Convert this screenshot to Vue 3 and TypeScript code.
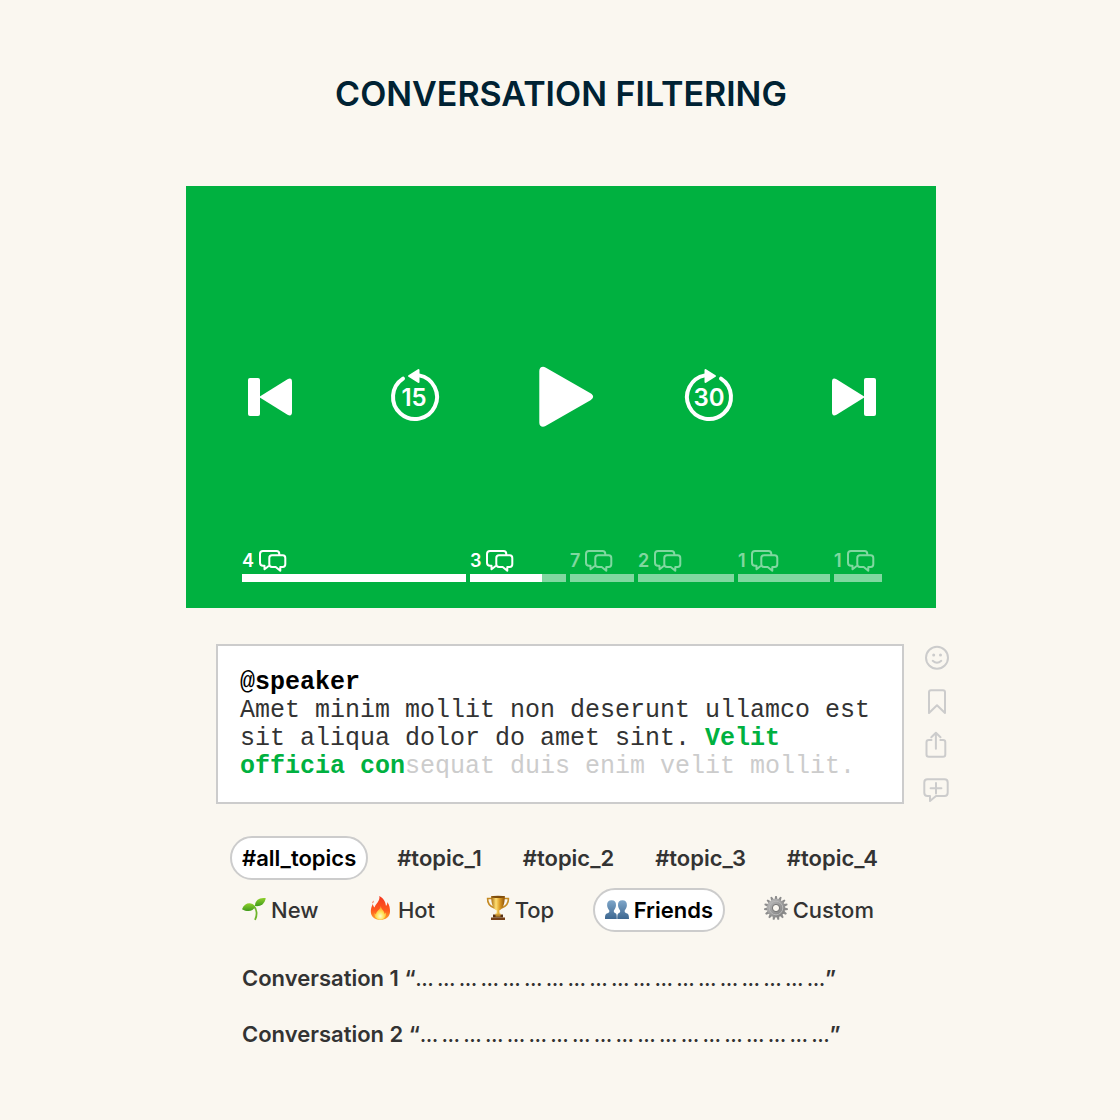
<script setup lang="ts">
import { ref } from 'vue'

interface Segment {
  comments: number
  length: number
  played: number
}

const segments: Segment[] = [
  { comments: 4, length: 224, played: 100 },
  { comments: 3, length: 96, played: 75 },
  { comments: 7, length: 64, played: 0 },
  { comments: 2, length: 96, played: 0 },
  { comments: 1, length: 92, played: 0 },
  { comments: 1, length: 48, played: 0 },
]

const topics: string[] = ['#all_topics', '#topic_1', '#topic_2', '#topic_3', '#topic_4']
const filters: string[] = ['New', 'Hot', 'Top', 'Friends', 'Custom']
const activeTopic = ref<string>('#all_topics')
const activeFilter = ref<string>('Friends')

const excerpt: string = Array(19).fill('…').join(' ')
const conversations: string[] = ['Conversation 1', 'Conversation 2']

const gearTeeth: number[] = Array.from({ length: 15 }, (_, i) => i * 24)
</script>

<template>
  <main class="page">
    <h1 class="title">CONVERSATION FILTERING</h1>

    <section class="player" aria-label="Player">
      <div class="controls">
        <button class="control" type="button" aria-label="Previous">
          <svg viewBox="0 0 56 56">
            <rect x="6" y="9" width="12" height="38" rx="2" />
            <path d="M17 28 45.5 10.2Q50 8 50 13V43Q50 48 45.5 45.8Z" />
          </svg>
        </button>
        <button class="control" type="button" aria-label="Back 15 seconds">
          <svg viewBox="0 0 56 56">
            <path class="ring" d="M15 9.6A22 22 0 1 0 31 6.4" />
            <path class="head" d="M21 7 30.5 1V13Z" />
            <text x="26" y="37">15</text>
          </svg>
        </button>
        <button class="control" type="button" aria-label="Play">
          <svg viewBox="0 0 56 56">
            <path d="M5.3 2C5.3-1.5 8.5-3.2 11.5-1.4L56.5 24.3C60 26.3 60 29.2 56.5 31.2L11.5 57C8.5 58.8 5.3 57.2 5.3 53.8Z" />
          </svg>
        </button>
        <button class="control" type="button" aria-label="Forward 30 seconds">
          <svg viewBox="0 0 56 56">
            <path class="ring" d="M41 9.6A22 22 0 1 1 25 6.4" />
            <path class="head" d="M35 7 25.5 1V13Z" />
            <text x="29" y="37">30</text>
          </svg>
        </button>
        <button class="control" type="button" aria-label="Next">
          <svg viewBox="0 0 56 56">
            <rect x="38" y="9" width="12" height="38" rx="2" />
            <path d="M39 28 10.5 10.2Q6 8 6 13V43Q6 48 10.5 45.8Z" />
          </svg>
        </button>
      </div>

      <div class="timeline">
        <div
          v-for="(segment, i) in segments"
          :key="i"
          class="segment"
          :class="{ upcoming: segment.played === 0 }"
          :style="{ flexGrow: segment.length }"
        >
          <div class="count">
            <span>{{ segment.comments }}</span>
            <svg class="chat" viewBox="0 0 28 22">
              <path d="M20.3 5V4Q20.3 1 17.5 1H4Q1 1 1 4V12.7Q1 15.7 4 15.7H5.5V19.3L10 15.7" />
              <path d="M13 5.3H23.7Q26.3 5.3 26.3 8V14.3Q26.3 17 23.7 17H21.3V20.7L16.7 17H13Q10.3 17 10.3 14.3V8Q10.3 5.3 13 5.3Z" />
            </svg>
          </div>
          <div class="track">
            <div class="fill" :style="{ width: segment.played + '%' }"></div>
          </div>
        </div>
      </div>
    </section>

    <section class="transcript">
      <div class="quote">
        <strong class="speaker"><span class="at">@</span>speaker</strong>
        <p>
          Amet minim mollit non deserunt ullamco est sit aliqua dolor do amet sint.
          <b>Velit officia con</b><span class="unspoken">sequat duis enim velit mollit.</span>
        </p>
      </div>
      <div class="actions">
        <button type="button" aria-label="React">
          <svg viewBox="0 0 30 28">
            <circle cx="15" cy="13.7" r="11" />
            <circle class="dot" cx="11.7" cy="11" r="1.5" />
            <circle class="dot" cx="18.5" cy="11" r="1.5" />
            <path d="M10.7 16.8Q15 20.6 19.3 16.8" />
          </svg>
        </button>
        <button type="button" aria-label="Bookmark">
          <svg viewBox="0 0 30 28">
            <path d="M7 25V4.3Q7 2.3 9 2.3H21Q23 2.3 23 4.3V25L15 17.2Z" />
          </svg>
        </button>
        <button type="button" aria-label="Share">
          <svg viewBox="0 0 30 28">
            <path d="M9.5 8H6.8Q4.5 8 4.5 10.3V22.5Q4.5 24.8 6.8 24.8H21Q23.3 24.8 23.3 22.5V10.3Q23.3 8 21 8H18.3" />
            <path d="M13.9 16.7V1M9.3 5.3 13.9.7 18.5 5.3" />
          </svg>
        </button>
        <button type="button" aria-label="Add comment">
          <svg viewBox="0 0 30 28">
            <path d="M5.5 3.2H22.5Q25.7 3.2 25.7 6.4V16.8Q25.7 20 22.5 20H14L8 25V20H5.5Q2.3 20 2.3 16.8V6.4Q2.3 3.2 5.5 3.2Z" />
            <path d="M14 7V17.4M8.6 12.2H19.4" />
          </svg>
        </button>
      </div>
    </section>

    <nav class="filters" aria-label="Conversation filters">
      <div class="row topics">
        <button
          v-for="topic in topics"
          :key="topic"
          type="button"
          class="chip"
          :class="{ active: topic === activeTopic }"
          :aria-pressed="topic === activeTopic"
          @click="activeTopic = topic"
        >
          {{ topic }}
        </button>
      </div>
      <div class="row sorts">
        <button
          v-for="filter in filters"
          :key="filter"
          type="button"
          class="chip"
          :class="{ active: filter === activeFilter }"
          :aria-pressed="filter === activeFilter"
          @click="activeFilter = filter"
        >
          <svg v-if="filter === 'New'" class="emoji" viewBox="0 0 24 28">
            <defs>
              <linearGradient id="leaf" x1="0" y1="0" x2="0" y2="1">
                <stop offset="0" stop-color="#8fd02c" />
                <stop offset="1" stop-color="#3f9a1c" />
              </linearGradient>
            </defs>
            <path d="M12 10.5C15 13 15.3 19 13.3 23.2" fill="none" stroke="#6db52a" stroke-width="1.8" stroke-linecap="round" />
            <path d="M0 13.2C2.5 6.6 9.5 5.4 13.2 10.6C11 16.4 4.5 15.8 0 13.2Z" fill="url(#leaf)" />
            <path d="M13 10C13 4 17.5 1.3 23.8 2.2C22.5 8.2 18.5 10.8 13 10Z" fill="url(#leaf)" />
          </svg>
          <svg v-else-if="filter === 'Hot'" class="emoji" viewBox="0 0 24 28">
            <defs>
              <linearGradient id="flame" x1="0" y1="0" x2="0" y2="1">
                <stop offset="0" stop-color="#f4351f" />
                <stop offset=".6" stop-color="#ff5a1c" />
                <stop offset="1" stop-color="#ffa52a" />
              </linearGradient>
              <radialGradient id="ember" cx=".5" cy=".75" r=".6">
                <stop offset="0" stop-color="#fffbd0" />
                <stop offset=".5" stop-color="#ffe45a" />
                <stop offset="1" stop-color="#ffa52e" />
              </radialGradient>
            </defs>
            <path d="M10.3 0C15 2.5 16.5 6 17 10C18.2 8.8 18.4 7.4 18.2 6C20.5 9 21.2 12.5 21 16C20.6 21 16.8 23.8 11.5 23.8C5.5 23.8 1.6 20.5 1.8 15C1.9 12 3 9.8 3.7 8C4.2 9.5 4.5 10.5 5.6 11.5C6.5 7.5 11.5 5 10.3 0Z" fill="url(#flame)" />
            <path d="M11.8 10C12.2 13.5 15.4 14.5 15.5 18L17 16.5C17.6 20.8 15.2 23.5 11.3 23.5C7.4 23.5 5 21.2 5.5 17L7 18.5C7 14.8 11.4 14 11.8 10Z" fill="url(#ember)" />
            <path d="M4.5 4.5Q3 6 3.5 7.5Q5 6.3 4.5 4.5Z" fill="#f4471f" />
          </svg>
          <svg v-else-if="filter === 'Top'" class="emoji" viewBox="0 0 24 28">
            <defs>
              <linearGradient id="gold" x1="0" y1="0" x2="1" y2="0">
                <stop offset="0" stop-color="#a8690e" />
                <stop offset=".35" stop-color="#ffdf72" />
                <stop offset=".65" stop-color="#d9961f" />
                <stop offset="1" stop-color="#8e5207" />
              </linearGradient>
            </defs>
            <path d="M6 2.5H1.6Q1.3 9.5 8.5 12M18 2.5H22.4Q22.7 9.5 15.5 12" fill="none" stroke="#c58a22" stroke-width="1.6" />
            <path d="M5.2 0H18.8C18.8 8 17 13 13.2 14.5L13.8 19H10.2L10.8 14.5C7 13 5.2 8 5.2 0Z" fill="url(#gold)" />
            <ellipse cx="12" cy=".9" rx="6.8" ry="1.2" fill="#7f4d0b" />
            <path d="M7 18.5H17V21.5H7Z" fill="#5a3213" />
            <path d="M9 17.8H15V18.8H9ZM9.5 19.2H14.5V20.5H9.5Z" fill="#e0a838" />
            <path d="M5 21.5H19V24H5Z" fill="#754018" />
          </svg>
          <svg v-else-if="filter === 'Friends'" class="emoji" viewBox="0 0 24 28">
            <defs>
              <linearGradient id="bust" x1="0" y1="0" x2="0" y2="1">
                <stop offset="0" stop-color="#7ea6c9" />
                <stop offset="1" stop-color="#3e6790" />
              </linearGradient>
            </defs>
            <path d="M6.6 4.3C9.6 4.3 11.2 6.2 11 9.2C10.9 11.3 10 13 9 14.3C8.4 16 9.2 16.8 10.6 17.3C11.6 17.9 11.8 18.8 11.8 23H0C0 18.8.6 17.9 2.5 17.3C4 16.8 4.7 16 4.2 14.3C3.1 13 2.2 11.3 2.1 9.2C2 6.2 3.6 4.3 6.6 4.3Z" fill="url(#bust)" />
            <path d="M17.4 4.3C14.4 4.3 12.8 6.2 13 9.2C13.1 11.3 14 13 15 14.3C15.6 16 14.8 16.8 13.6 17.3C12.5 18 12.3 19 12.3 23H24C24 18.8 23.4 17.9 21.5 17.3C20 16.8 19.3 16 19.8 14.3C20.9 13 21.8 11.3 21.9 9.2C22 6.2 20.4 4.3 17.4 4.3Z" fill="url(#bust)" />
          </svg>
          <svg v-else class="emoji" viewBox="0 0 24 28">
            <defs>
              <linearGradient id="steel" x1="0" y1="0" x2="1" y2="1">
                <stop offset="0" stop-color="#b4b4b4" />
                <stop offset="1" stop-color="#858585" />
              </linearGradient>
            </defs>
            <path
              v-for="angle in gearTeeth"
              :key="angle"
              d="M10.4 4 11.2 0H12.8L13.6 4Z"
              fill="#8c8c8c"
              :transform="`rotate(${angle} 12 12)`"
            />
            <circle cx="12" cy="12" r="6.2" fill="none" stroke="url(#steel)" stroke-width="6" />
            <circle cx="12" cy="12" r="6.8" fill="none" stroke="#b8b8b8" stroke-width="1" />
            <circle cx="12" cy="12" r="3.6" fill="none" stroke="#777" stroke-width="1" />
          </svg>
          <span>{{ filter }}</span>
        </button>
      </div>
    </nav>

    <ul class="conversations">
      <li v-for="name in conversations" :key="name">
        {{ name }} “<span class="excerpt">{{ excerpt }}</span>”
      </li>
    </ul>
  </main>
</template>

<style>
body {
  margin: 0;
  background: #faf7f0;
}
</style>

<style scoped>
.page {
  box-sizing: border-box;
  max-width: 752px;
  margin: 0 auto;
  padding: 72px 0 72px 2px;
  font-family: Inter, "Liberation Sans", sans-serif;
  color: #333;
}

.title {
  margin: 0 0 70px;
  font-size: 34px;
  line-height: 44px;
  font-weight: 600;
  text-align: center;
  color: #002233;
}

button {
  margin: 0;
  padding: 0;
  border: 0;
  background: none;
  font: inherit;
  color: inherit;
  cursor: pointer;
}

svg {
  display: block;
  overflow: visible;
}

.player {
  box-sizing: border-box;
  display: grid;
  grid-template-rows: 1fr auto 1fr;
  aspect-ratio: 16 / 9;
  padding: 0 54px 0 56px;
  background: #00b140;
  color: #fff;
}

.controls {
  grid-row: 2;
  display: flex;
  justify-content: space-between;
}

.control {
  width: 56px;
  height: 56px;
}

.control svg {
  width: 56px;
  height: 56px;
  fill: #fff;
}

.control .ring {
  fill: none;
  stroke: #fff;
  stroke-width: 4;
  stroke-linecap: round;
}

.control .head {
  stroke: #fff;
  stroke-width: 2;
  stroke-linejoin: round;
}

.control text {
  font-size: 24px;
  font-weight: 600;
  text-anchor: middle;
}

.timeline {
  grid-row: 3;
  align-self: end;
  display: flex;
  gap: 4px;
  padding-bottom: 26px;
}

.segment {
  flex: 1 1 0;
  min-width: 0;
}

.count {
  display: flex;
  align-items: center;
  gap: 5px;
  height: 26px;
  font-size: 18px;
  line-height: 26px;
  font-weight: 600;
}

.chat {
  flex: none;
  width: 28px;
  height: 22px;
  fill: none;
  stroke: #fff;
  stroke-width: 2;
  stroke-linejoin: round;
}

.upcoming .count {
  opacity: 0.5;
}

.track {
  height: 8px;
  background: rgba(255, 255, 255, 0.5);
}

.fill {
  height: 8px;
  background: #fff;
}

.transcript {
  display: flex;
  gap: 18px;
  margin: 36px -16px 0 30px;
}

.quote {
  box-sizing: border-box;
  flex: 1;
  padding: 23px 22px 21px;
  border: 2px solid #ccc;
  background: #fff;
  font-family: "Liberation Mono", monospace;
  font-size: 25px;
  line-height: 28px;
}

.speaker {
  display: block;
  color: #000;
}

.at {
  font-weight: 400;
}

.quote p {
  margin: 0;
}

.quote b {
  color: #00b140;
}

.unspoken {
  color: #ccc;
}

.actions {
  display: flex;
  flex-direction: column;
  justify-content: space-between;
}

.actions svg {
  width: 30px;
  height: 28px;
  fill: none;
  stroke: #ccc;
  stroke-width: 2;
  stroke-linecap: round;
  stroke-linejoin: round;
}

.actions .dot {
  fill: #ccc;
  stroke: none;
}

.filters {
  display: flex;
  flex-direction: column;
  gap: 8px;
  margin: 32px 46px 0 44px;
}

.row {
  display: flex;
  justify-content: space-between;
}

.sorts {
  padding-right: 4px;
}

.chip {
  box-sizing: border-box;
  display: flex;
  align-items: center;
  gap: 5px;
  height: 44px;
  padding: 0 10px;
  border: 2px solid transparent;
  border-radius: 22px;
  font-size: 22px;
  line-height: 28px;
  font-weight: 600;
  white-space: nowrap;
}

.sorts .chip {
  font-weight: 500;
}

.row .active {
  border-color: #ccc;
  background: #fff;
  font-weight: 600;
  color: #000;
}

.emoji {
  flex: none;
  width: 24px;
  height: 28px;
}

.conversations {
  display: flex;
  flex-direction: column;
  gap: 28px;
  margin: 32px 56px 0;
  padding: 0;
  list-style: none;
  font-size: 22px;
  line-height: 28px;
  font-weight: 600;
}

.excerpt {
  font-size: 18px;
  line-height: 20px;
  font-weight: 700;
}
</style>
